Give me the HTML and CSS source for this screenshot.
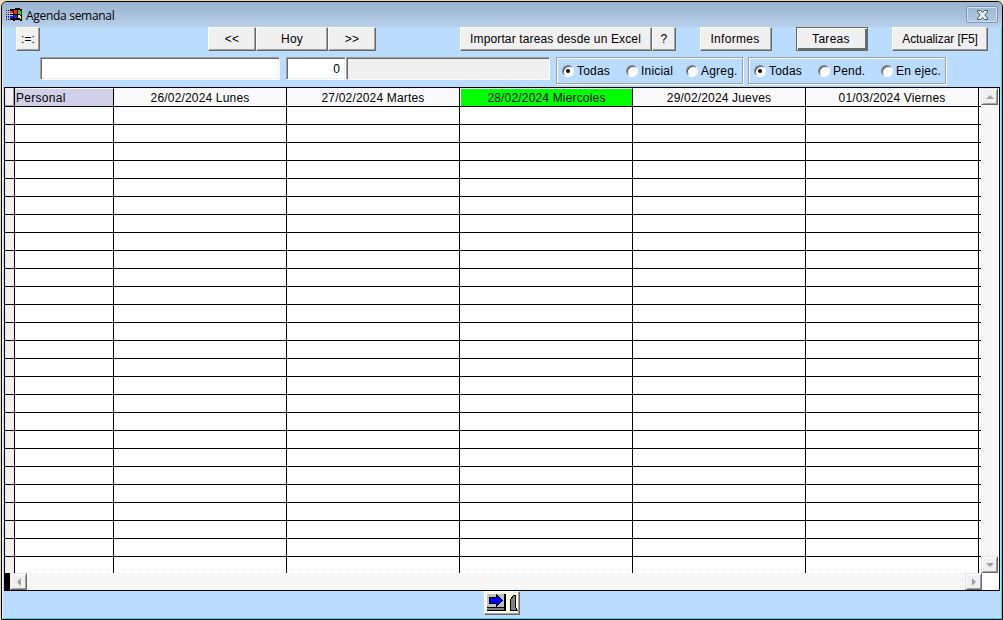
FILE: index.html
```html
<!doctype html>
<html lang="es">
<head>
<meta charset="utf-8">
<title>Agenda semanal</title>
<link rel="stylesheet" href="styles.css">
</head>
<body>
<div class="window">
	<div class="title">
		<svg class="logo" width="17" height="15" viewBox="0 0 17 15" shape-rendering="crispEdges">
			<path d="M7 2h2V1h5v1h2v12h-2v-1H9v1H7z" fill="#000"/>
			<path d="M8 3h3v4H8z" fill="#f22"/>
			<path d="M12 3h2v1h1v4h-1V7h-2z" fill="#2d2"/>
			<path d="M8 8h3v3H9v1H8z" fill="#22e"/>
			<path d="M12 8h2v1h1v3h-1v-1h-2z" fill="#fe2"/>
			<path d="M0 3h1v1H0zM2 3h1v1H2zM4 2h3v2H4zM0 7h1v1H0zM2 7h1v1H2zM4 7h3v1H4zM0 12h1v1H0zM2 12h1v1H2zM4 11h3v2H4z" fill="#000"/>
			<path d="M0 5h1v1H0zM2 5h1v1H2zM4 4h3v2H4z" fill="#f22"/>
			<path d="M0 9h1v2H0zM2 9h1v2H2zM4 9h3v2H4z" fill="#22e"/>
		</svg>
		<span>Agenda semanal</span>
		<a class="close">
			<svg width="13" height="10" viewBox="0 0 13 10">
				<path d="M1.500 .5h3l2 2 2-2h3v1.500L8.800 5l2.700 3v1.500h-3l-2-2-2 2h-3V8l2.700-3-2.700-3z" fill="#e8edf2" stroke="#4b5665"/>
			</svg>
		</a>
	</div>
	<div class="tools">
		<button class="b-menu">:=:</button>
		<button class="b-prev">&lt;&lt;</button>
		<button class="b-today">Hoy</button>
		<button class="b-next">&gt;&gt;</button>
		<button class="b-import">Importar tareas desde un Excel</button>
		<button class="b-help">?</button>
		<button class="b-reports">Informes</button>
		<button class="b-tasks">Tareas</button>
		<button class="b-refresh">Actualizar [F5]</button>
	</div>
	<div class="filters">
		<div class="field search"></div>
		<div class="field code">0</div>
		<div class="field name"></div>
		<div class="group first">
			<label class="on"><i></i>Todas</label>
			<label><i></i>Inicial</label>
			<label><i></i>Agreg.</label>
		</div>
		<div class="group second">
			<label class="on"><i></i>Todas</label>
			<label><i></i>Pend.</label>
			<label><i></i>En ejec.</label>
		</div>
	</div>
	<div class="agenda">
		<div class="view">
			<div class="rows">
				<div class="row head">
					<span class="mark"></span>
					<span class="staff">Personal</span>
					<span>26/02/2024 Lunes</span>
					<span>27/02/2024 Martes</span>
					<span class="today">28/02/2024 Miercoles</span>
					<span>29/02/2024 Jueves</span>
					<span>01/03/2024 Viernes</span>
				</div>
			</div>
			<div class="vscroll">
				<a class="arrow"><svg width="8" height="4"><path d="M0 4L4 0l4 4z"/></svg></a>
				<a class="arrow"><svg width="8" height="4"><path d="M0 0h8L4 4z"/></svg></a>
			</div>
		</div>
		<div class="hscroll">
			<a class="arrow"><svg width="4" height="8"><path d="M4 0v8L0 4z"/></svg></a>
			<a class="arrow"><svg width="4" height="8"><path d="M0 0v8l4-4z"/></svg></a>
			<b class="corner"></b>
		</div>
	</div>
	<div class="foot">
		<button class="b-exit">
			<svg width="32" height="20" viewBox="0 0 32 20" shape-rendering="crispEdges">
				<path d="M0 0h32v20H0z" fill="#ffffe6"/>
				<path d="M1 1h18v14H1z" fill="#c0c0c0"/>
				<path d="M1 15h18v3H1z" fill="#808080"/>
				<path d="M1 14h17V1h2v17H1v-1h17v-2H1z" fill="#000"/>
				<path d="M3.500 4.500h7v-3l6 6-6 6v-3h-7z" fill="#00f" stroke="#000"/>
				<path d="M24.500 17.500v-11l3-4h2v12l2 3z" fill="#808080" stroke="#000"/>
			</svg>
		</button>
	</div>
</div>
<script>
var oRows = document.querySelector('.rows');
for(var i=0;i<26;i++){
	var oRow = document.createElement('div');
	oRow.className = 'row';
	oRow.innerHTML = '<span class="mark"></span><span class="staff"></span><span></span><span></span><span></span><span></span><span></span>';
	oRows.appendChild(oRow);
}
</script>
</body>
</html>
```
FILE: styles.css
```css
*{margin:0; padding:0; box-sizing:border-box;}
body{width:1004px; height:620px; padding:1px 1px 0 1px; background:#e9d8b9; font:12px/14px "Liberation Sans",Arial,sans-serif; color:#000; overflow:hidden;}
svg{display:block;}
.window{width:1002px; height:619px; border:1px solid #000; border-radius:6px 6px 0 0; background:#b9dcff; overflow:hidden; box-shadow:inset 1px 0 #e6f3ff,inset -1px -1px #2fd4ea;}

.title{display:flex; align-items:center; height:25px; padding:0 4px 0 4px; background:linear-gradient(#98b3d0,#b8d0e9); font:12px/15px "Open Sans","Noto Sans",sans-serif; letter-spacing:-.3px;}
.title span{flex:1; margin-left:3px; padding-top:2px;}
.close{display:flex; align-items:center; justify-content:center; width:32px; height:17px; border:1px solid #8094ab; border-radius:2px; box-shadow:inset 0 0 0 1px #cfdfef;}

.tools{display:flex; height:24px; padding-left:14px;}
button{height:24px; border:1px solid; border-color:#fff #696969 #696969 #fff; background:#f0f0f0; box-shadow:inset -1px -1px #a0a0a0; font:inherit; letter-spacing:.14px; white-space:nowrap;}
.b-menu{width:24px;}
.b-prev{width:48px; margin-left:168px;}
.b-today{width:72px;}
.b-next{width:48px;}
.b-import{width:192px; margin-left:84px; padding-right:1px;}
.b-help{width:24px;}
.b-reports{width:72px; margin-left:24px; padding-right:2px; letter-spacing:.3px;}
.b-tasks{width:72px; margin-left:24px; padding-right:2px; border-color:#696969; box-shadow:inset 1px 1px #fff,inset -2px -2px #696969; letter-spacing:.3px;}
.b-refresh{width:96px; margin-left:24px; letter-spacing:-.08px;}

.filters{display:flex; height:36px; padding:6px 0 0 38px;}
.field{height:23px; border:1px solid; border-color:#a0a0a0 #fff #fff #a0a0a0; background:#fff; box-shadow:inset 1px 1px #696969,inset -1px -1px #f0f0f0; line-height:23px;}
.search{width:240px;}
.code{width:60px; margin-left:6px; padding-right:5px; text-align:right;}
.name{width:204px; background:#f0f0f0;}
.group{display:grid; height:27px; border:1px solid #a0a0a0; box-shadow:inset 1px 1px #fff,1px 1px #fff; line-height:26px; letter-spacing:.2px;}
.first{grid-template-columns:64px 60px 1fr; width:187px; margin-left:6px;}
.second{grid-template-columns:64px 63px 1fr; width:198px; margin-left:5px;}
label{display:flex; align-items:center; white-space:nowrap;}
i{position:relative; width:12px; height:12px; margin:0 3px 0 5px; border:1px solid; border-color:#808080 #fff #fff #808080; border-radius:50%; background:#fff; box-shadow:inset 1px 1px #555;}
.on i:after{content:""; position:absolute; left:3px; top:3px; width:4px; height:4px; border-radius:50%; background:#000;}

.agenda{width:996px; height:504px; margin-left:2px; border:1px solid #000; background:#fff;}
.view{display:flex; height:485px;}
.rows{width:976px; height:485px; overflow:hidden;}
.row{display:flex; height:18px; border-bottom:1px solid #000;}
.row span{width:173px; border-right:1px solid #000; text-align:center;}
.row .mark{width:10px; background:#f0f0f0;}
.row .staff{width:99px;}
.head{height:19px; line-height:20px; letter-spacing:.17px; background:#fafafa;}
.head .mark{box-shadow:inset -1px -1px #a0a0a0;}
.head .staff{border-top:1px solid #fafafa; background:#d0d0e8; line-height:19px; text-align:left; padding-left:1px; letter-spacing:.3px;}
.head .today{border-top:1px solid #fafafa; border-left:1px solid #fafafa; background:#0f0; line-height:19px;}
.vscroll,.hscroll{display:flex; justify-content:space-between; background:repeating-conic-gradient(#fff 0 25%,#f0f0f0 0 50%) 0 0/2px 2px;}
.vscroll{flex-direction:column; width:17px;}
.hscroll{height:17px; border-left:5px solid #000;}
.arrow{display:flex; align-items:center; justify-content:center; width:17px; height:17px; border:1px solid; border-color:#e3e3e3 #696969 #696969 #e3e3e3; background:#f0f0f0; box-shadow:inset 1px 1px #fff,inset -1px -1px #a0a0a0;}
.arrow path{fill:#a0a0a0;}
.hscroll .arrow + .arrow{margin-left:auto;}
.corner{width:17px; background:#fff;}

.foot{display:flex; justify-content:center;}
.b-exit{width:36px; padding:1px;}
```
